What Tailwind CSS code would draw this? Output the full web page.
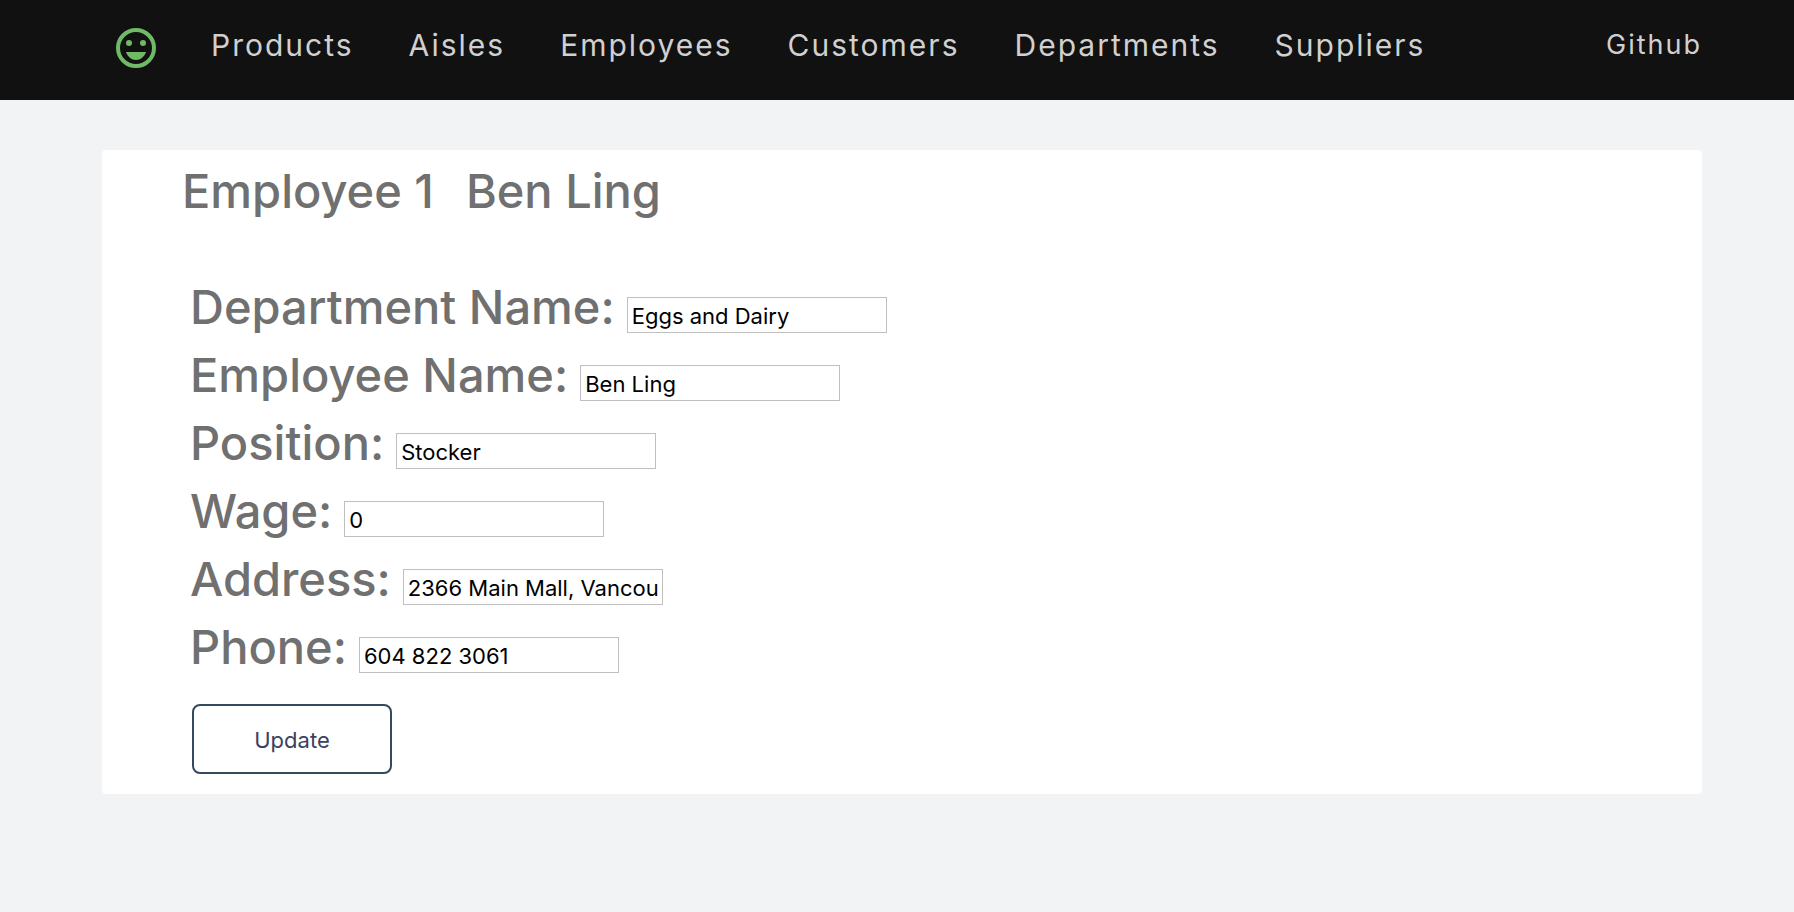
<!DOCTYPE html>
<html lang="en">
<head>
<meta charset="utf-8">
<meta name="viewport" content="width=device-width, initial-scale=1">
<title>Employee 1</title>
<script src="https://cdn.jsdelivr.net/npm/@tailwindcss/browser@4"></script>
</head>
<body class="min-h-screen bg-[#f1f3f5] font-['Inter',sans-serif] text-[#707070]">
<header class="bg-[#111111] pr-[92px] pl-[102px] text-[#d0d0d0]">
  <nav class="flex h-[100px] items-start pt-6 pl-[10px] text-[30px] leading-[42px] tracking-[2px]">
    <a href="#" aria-label="Home" class="mr-[51px] shrink-0">
      <svg class="size-12" viewBox="0 0 24 24" fill="#70b966" aria-hidden="true">
        <circle cx="12" cy="12" r="9" fill="none" stroke="#70b966" stroke-width="2"/>
        <circle cx="8.5" cy="9.5" r="1.5"/>
        <circle cx="15.5" cy="9.5" r="1.5"/>
        <path d="M12 18c2.28 0 4.22-1.66 5-4H7c.78 2.34 2.72 4 5 4z"/>
      </svg>
    </a>
    <div class="flex gap-[55px]">
      <a href="#">Products</a>
      <a href="#">Aisles</a>
      <a href="#">Employees</a>
      <a href="#">Customers</a>
      <a href="#">Departments</a>
      <a href="#">Suppliers</a>
    </div>
    <a href="#" class="ml-auto text-[27px] leading-[41px]">Github</a>
  </nav>
</header>
<main class="mt-[50px] mr-[92px] ml-[102px] rounded bg-white px-20 pt-2 pb-5">
  <h1 class="flex gap-8 text-[47px] leading-[66px] font-medium"><span>Employee 1</span><span>Ben Ling</span></h1>
  <form class="mt-[49px] px-2 text-[47px] leading-[68px] font-medium">
    <div class="flex items-baseline gap-3">
      <label for="department">Department Name:</label>
      <input id="department" type="text" value="Eggs and Dairy" class="h-9 w-[260px] border border-[#bfbfbf] bg-white px-1 pt-[2px] text-[22px] font-normal text-black">
    </div>
    <div class="flex items-baseline gap-3">
      <label for="name">Employee Name:</label>
      <input id="name" type="text" value="Ben Ling" class="h-9 w-[260px] border border-[#bfbfbf] bg-white px-1 pt-[2px] text-[22px] font-normal text-black">
    </div>
    <div class="flex items-baseline gap-3">
      <label for="position">Position:</label>
      <input id="position" type="text" value="Stocker" class="h-9 w-[260px] border border-[#bfbfbf] bg-white px-1 pt-[2px] text-[22px] font-normal text-black">
    </div>
    <div class="flex items-baseline gap-3">
      <label for="wage">Wage:</label>
      <input id="wage" type="text" value="0" class="h-9 w-[260px] border border-[#bfbfbf] bg-white px-1 pt-[2px] text-[22px] font-normal text-black">
    </div>
    <div class="flex items-baseline gap-3">
      <label for="address">Address:</label>
      <input id="address" type="text" value="2366 Main Mall, Vancouver" class="h-9 w-[260px] border border-[#bfbfbf] bg-white px-1 pt-[2px] text-[22px] font-normal text-black">
    </div>
    <div class="flex items-baseline gap-3">
      <label for="phone">Phone:</label>
      <input id="phone" type="text" value="604 822 3061" class="h-9 w-[260px] border border-[#bfbfbf] bg-white px-1 pt-[2px] text-[22px] font-normal text-black">
    </div>
    <button type="submit" class="mt-[23px] ml-[2px] block h-[70px] w-[200px] rounded-lg border-2 border-[#34495e] pt-[2px] text-[22px] leading-8 font-normal text-[#3b4260]">Update</button>
  </form>
</main>
</body>
</html>
